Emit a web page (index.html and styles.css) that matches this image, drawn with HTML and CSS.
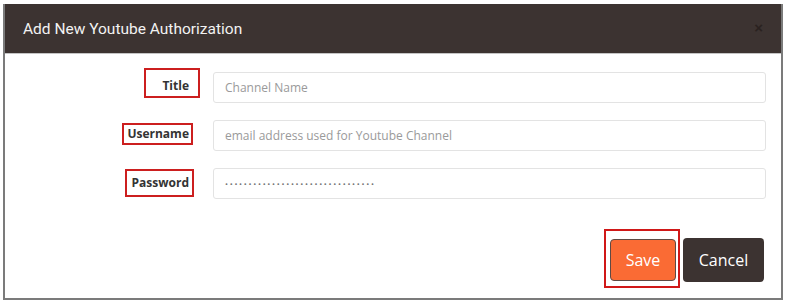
FILE: index.html
```html
<!DOCTYPE html>
<html lang="en">
<head>
<meta charset="utf-8">
<title>Add New Youtube Authorization</title>
<link rel="stylesheet" href="styles.css">
</head>
<body>
<div class="modal">
  <div class="modal-header">
    <h1 class="modal-title">Add New Youtube Authorization</h1>
    <span class="close">&times;</span>
  </div>
  <form class="modal-body">
    <div class="row">
      <div class="label-cell"><span class="label label-title">Title</span></div>
      <input class="field" type="text" placeholder="Channel Name">
    </div>
    <div class="row">
      <div class="label-cell"><span class="label label-user">Username</span></div>
      <input class="field" type="text" placeholder="email address used for Youtube Channel">
    </div>
    <div class="row">
      <div class="label-cell"><span class="label label-pass">Password</span></div>
      <input class="field field-pass" type="password" value="12345678901234567890123456789012">
    </div>
  </form>
  <div class="modal-footer">
    <span class="save-mark"><button class="btn btn-save" type="button">Save</button></span>
    <button class="btn btn-cancel" type="button">Cancel</button>
  </div>
</div>
</body>
</html>
```
FILE: styles.css
```css
html, body {
  margin: 0;
  padding: 0;
  background: #ffffff;
}
body {
  font-family: "Open Sans", "Liberation Sans", sans-serif;
}
.modal {
  margin: 4px 3px 0 3px;
  width: 780px;
  height: 296px;
  box-sizing: border-box;
  border-left: 2px solid #7b7b7b;
  border-right: 2px solid #7b7b7b;
  border-bottom: 2px solid #7b7b7b;
  background: #fff;
  display: flex;
  flex-direction: column;
}
.modal-header {
  height: 50px;
  box-sizing: border-box;
  background: #3c3331;
  border-bottom: 1px solid #c4c4c4;
  display: flex;
  align-items: center;
  justify-content: space-between;
  padding: 0 18px 0 18px;
}
.modal-title {
  margin: 0;
  font-family: Roboto, "Liberation Sans", sans-serif;
  font-weight: 400;
  font-size: 15.5px;
  color: #f2f2f2;
  letter-spacing: 0;
}
.close {
  font-family: "Liberation Sans", sans-serif;
  font-weight: 700;
  font-size: 15px;
  color: #2a2220;
  line-height: 1;
  margin-top: -2px;
}
.modal-body {
  margin: 0;
  padding: 18px 15px 0 0;
  display: flex;
  flex-direction: column;
  gap: 17px;
}
.row {
  display: grid;
  grid-template-columns: 184px 553px;
  grid-template-rows: 31px;
  column-gap: 24px;
  align-items: center;
  height: 31px;
}
.label-cell {
  display: flex;
  justify-content: flex-end;
  align-items: center;
  height: 31px;
}
.label {
  font-size: 12px;
  line-height: 16px;
  font-weight: 700;
  color: #333;
  border: 2px solid #cc1f1f;
}
.label-title {
  padding: 8px 9px 2px 16px;
  margin: 0 -11px 9px 0;
}
.label-user {
  padding: 1px 2px 1px 3px;
  margin: 0 -4px 3px 0;
}
.label-pass {
  padding: 4px 3px 4px 5px;
  margin: 0 -5px 1px 0;
}
.field {
  box-sizing: border-box;
  height: 31px;
  width: 553px;
  border: 1px solid #e3e3e3;
  border-radius: 3px;
  padding: 0 11px;
  font-family: "Open Sans", "Liberation Sans", sans-serif;
  font-size: 12px;
  color: #666;
  background: #fff;
  outline: none;
}
.field::placeholder {
  color: #9a9a9a;
}
.field-pass {
  color: #777;
  font-size: 8px;
  letter-spacing: 1.7px;
}
.modal-footer {
  margin-top: 30px;
  padding-right: 17px;
  display: flex;
  justify-content: flex-end;
  align-items: flex-start;
}
.save-mark {
  display: block;
  border: 2px solid #d01818;
  padding: 8px 2px 5px 4px;
}
.btn {
  font-family: "Open Sans", "Liberation Sans", sans-serif;
  font-size: 16px;
  color: #fff;
  border-radius: 4px;
  cursor: pointer;
  padding: 0;
}
.btn-save {
  width: 66px;
  height: 42px;
  background: #fa6b34;
  border: 1px solid #5e4a44;
  display: block;
}
.btn-cancel {
  width: 81px;
  height: 44px;
  margin-left: 3px;
  margin-top: 9px;
  background: #3c3331;
  border: none;
}
```
